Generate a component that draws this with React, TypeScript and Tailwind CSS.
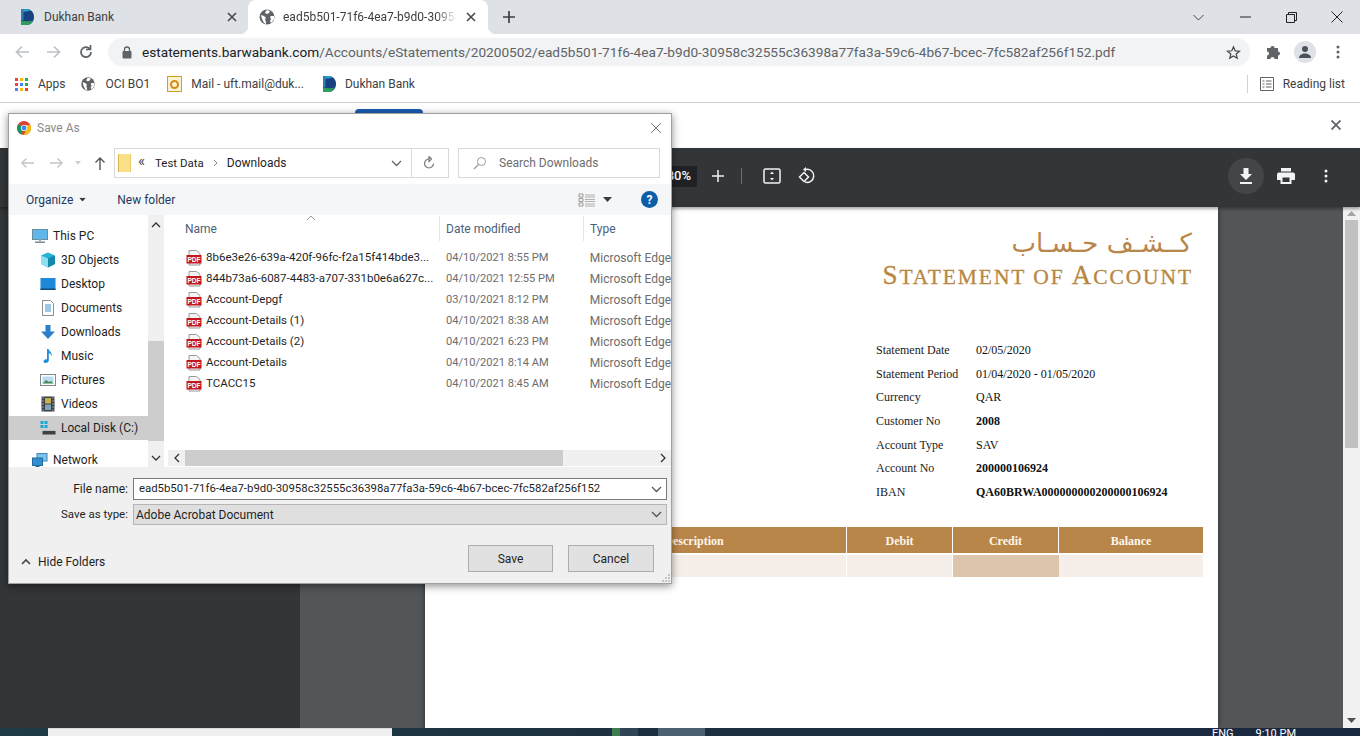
import React from "react";

const Dukhan = () => (
  <svg width="14" height="18" viewBox="0 0 14 18" className="shrink-0">
    <path d="M1 1H6C11 1 14 4.500 14 9C14 13.500 11 17 6 17H1Z" fill="#17417f" />
    <path d="M1 1H6C8 1 9.500 1.600 10.800 2.600C8 3.200 5 4 1 4Z" fill="#2b9cc4" />
    <path d="M1 1H3.500V12H1Z" fill="#2a7fb8" />
    <path d="M1 12.500C5 13.500 9 13.500 13 12.400C11.800 15.200 9.200 17 6 17H1Z" fill="#2f9e5b" />
  </svg>
);

const Globe = ({ className = "" }: { className?: string }) => (
  <svg width="16" height="16" viewBox="0 0 16 16" className={`shrink-0 ${className}`}>
    <circle cx="8" cy="8" r="7.500" fill="#5f6368" />
    <path d="M2 6l3 1 2 2-1 1 1 3v2l-2-1-2-4zM8 1l3 1-1 2-2 1-2-1 1-2zM12 7h3v3l-2 3-1 1-1-2 1-2-1-2z" fill="#fff" />
  </svg>
);

const ChromeLogo = () => (
  <svg width="14" height="14" viewBox="0 0 14 14" className="shrink-0">
    <circle cx="7" cy="7" r="7" fill="#db4437" />
    <path d="M7 7L1 3.500A7 7 0 0 0 4 13.300Z" fill="#0f9d58" />
    <path d="M7 4h5.900A7 7 0 0 1 14 7a7 7 0 0 1-7 7l-.5-.1L10 8z" fill="#f4c20d" />
    <circle cx="7" cy="7" r="3.100" fill="#fff" />
    <circle cx="7" cy="7" r="2.400" fill="#4285f4" />
  </svg>
);

const PdfIcon = () => (
  <svg width="16" height="16" viewBox="0 0 16 16" className="shrink-0">
    <path d="M3 .5h7.500L14 3.500V15H3z" fill="#f4f4f4" stroke="#9a9a9a" />
    <rect x="0.500" y="5" width="15" height="8.500" fill="#c4161c" />
    <text x="8" y="12" textAnchor="middle" fontSize="6.600" fontWeight="700" fill="#fff" fontFamily="Liberation Sans, sans-serif">PDF</text>
  </svg>
);

const NavIcon = ({ kind }: { kind: string }) => {
  const common = { width: 16, height: 16, viewBox: "0 0 16 16", className: "shrink-0" };
  switch (kind) {
    case "pc":
      return (
        <svg {...common}>
          <rect x="0.500" y="1.500" width="15" height="10" fill="#5fb6ea" stroke="#6a8ca0" />
          <rect x="3" y="13.500" width="10" height="1.500" fill="#7c8a94" />
          <rect x="7" y="11.500" width="2" height="2" fill="#9aa5ad" />
        </svg>
      );
    case "3d":
      return (
        <svg {...common}>
          <path d="M8 0.500L15 3.500V12L8 15.500L1 12V3.500Z" fill="#27b3d6" />
          <path d="M1 3.500L8 6.500V15.500L1 12Z" fill="#8fe0f0" />
          <path d="M8 6.500L15 3.500V12L8 15.500Z" fill="#1489ac" />
        </svg>
      );
    case "desktop":
      return (
        <svg {...common}>
          <rect x="0.500" y="2" width="15" height="12" fill="#1f88d8" />
          <rect x="0.500" y="12.500" width="15" height="1.500" fill="#0d4a7d" />
        </svg>
      );
    case "docs":
      return (
        <svg {...common}>
          <path d="M2.500 .5h8l3 3v12h-11z" fill="#fff" stroke="#8a8f94" />
          <path d="M5 5h6M5 7h6M5 9h6M5 11h6" stroke="#3f8fc5" />
        </svg>
      );
    case "down":
      return (
        <svg {...common}>
          <path d="M5.500 1h5v6.500H15L8 15 1 7.500h4.500z" fill="#2a80c8" />
        </svg>
      );
    case "music":
      return (
        <svg {...common}>
          <path d="M7 1h1.600c.4 2.400 3.600 3.400 3.400 7-.8-1.800-2-2.600-3.200-2.800V12.500C8.800 14.200 7 15 5.400 15 4 15 3.200 14 3.600 13c.5-1.200 2-1.900 3.400-1.600z" fill="#1e8fdc" />
        </svg>
      );
    case "pics":
      return (
        <svg {...common}>
          <rect x="0.500" y="2.500" width="15" height="11" fill="#fff" stroke="#7f8a92" />
          <rect x="2.500" y="4.500" width="11" height="7" fill="#b9dcef" />
          <path d="M2.500 11.500L6 8l3 2 2-1 2.500 2.500z" fill="#4f8a5c" />
        </svg>
      );
    case "videos":
      return (
        <svg {...common}>
          <rect x="1.500" y="0.500" width="13" height="15" fill="#3a3f44" />
          <rect x="5" y="2" width="6" height="5.500" fill="#c9b04d" />
          <rect x="5" y="8.500" width="6" height="5.500" fill="#7fa3b8" />
          <path d="M2.500 2h1M2.500 5h1M2.500 8h1M2.500 11h1M2.500 14h1M12.500 2h1M12.500 5h1M12.500 8h1M12.500 11h1M12.500 14h1" stroke="#fff" />
        </svg>
      );
    case "disk":
      return (
        <svg {...common}>
          <rect x="0.500" y="1" width="3" height="3" fill="#19a6d8" />
          <rect x="4.500" y="1" width="3" height="3" fill="#19a6d8" />
          <rect x="0.500" y="5" width="3" height="3" fill="#19a6d8" />
          <rect x="4.500" y="5" width="3" height="3" fill="#19a6d8" />
          <rect x="2.500" y="11" width="13" height="3.500" fill="#3c4246" />
          <rect x="2.500" y="10" width="13" height="1" fill="#b9c0c4" />
        </svg>
      );
    default:
      return (
        <svg {...common}>
          <rect x="5" y="1.500" width="10" height="7.500" fill="#7cc4ee" stroke="#3f87b8" />
          <rect x="0.500" y="6" width="10" height="7.500" fill="#2f8fd0" stroke="#236a9b" />
          <rect x="3.500" y="13.500" width="4" height="1.500" fill="#236a9b" />
        </svg>
      );
  }
};

const navItems = [
  ["pc", "This PC", 0],
  ["3d", "3D Objects", 1],
  ["desktop", "Desktop", 1],
  ["docs", "Documents", 1],
  ["down", "Downloads", 1],
  ["music", "Music", 1],
  ["pics", "Pictures", 1],
  ["videos", "Videos", 1],
  ["disk", "Local Disk (C:)", 1],
] as const;

const files = [
  ["8b6e3e26-639a-420f-96fc-f2a15f414bde3...", "04/10/2021 8:55 PM"],
  ["844b73a6-6087-4483-a707-331b0e6a627c...", "04/10/2021 12:55 PM"],
  ["Account-Depgf", "03/10/2021 8:12 PM"],
  ["Account-Details (1)", "04/10/2021 8:38 AM"],
  ["Account-Details (2)", "04/10/2021 6:23 PM"],
  ["Account-Details", "04/10/2021 8:14 AM"],
  ["TCACC15", "04/10/2021 8:45 AM"],
];

const statement: [string, string, boolean][] = [
  ["Statement Date", "02/05/2020", false],
  ["Statement Period", "01/04/2020 - 01/05/2020", false],
  ["Currency", "QAR", false],
  ["Customer No", "2008", true],
  ["Account Type", "SAV", false],
  ["Account No", "200000106924", true],
  ["IBAN", "QA60BRWA000000000200000106924", true],
];

const Caret = ({ className = "" }: { className?: string }) => (
  <svg width="9" height="5" viewBox="0 0 9 5" className={className}>
    <path d="M0 0h9L4.500 5z" fill="#3c3c3c" />
  </svg>
);

const Chev = ({ d = "M1 1l4.500 4.500L10 1", color = "#555", w = 11, h = 7 }: { d?: string; color?: string; w?: number; h?: number }) => (
  <svg width={w} height={h} viewBox={`0 0 ${w} ${h}`} className="shrink-0">
    <path d={d} fill="none" stroke={color} strokeWidth="1.300" />
  </svg>
);

function Dialog() {
  return (
    <div className="absolute z-20 left-[8px] top-[113px] w-[664px] h-[471px] bg-[#f0f0f0] border border-[#a0a0a0] shadow-[0_2px_8px_rgba(0,0,0,0.45)] flex flex-col text-[12px] text-[#1f1f1f] font-['Roboto',sans-serif]">
      {/* title */}
      <div className="h-[27px] bg-white flex items-center pl-[8px] pr-[8px] shrink-0">
        <ChromeLogo />
        <span className="ml-[6px] text-[#8a8a8a] text-[12px]">Save As</span>
        <svg width="12" height="12" viewBox="0 0 12 12" className="ml-auto mr-[1px]">
          <path d="M1 1l10 10M11 1L1 11" stroke="#777" strokeWidth="1" />
        </svg>
      </div>
      {/* address */}
      <div className="h-[43px] bg-white flex items-start pt-[7px] shrink-0">
        <div className="w-[105px] h-[30px] flex items-center pl-[11px]">
          <svg width="14" height="12" viewBox="0 0 14 12"><path d="M14 6H2M6.500 1.500L2 6l4.500 4.500" fill="none" stroke="#c4c4c4" strokeWidth="1.400" /></svg>
          <svg width="14" height="12" viewBox="0 0 14 12" className="ml-[16px]"><path d="M0 6h12M7.500 1.500L12 6l-4.500 4.500" fill="none" stroke="#c4c4c4" strokeWidth="1.400" /></svg>
          <svg width="6" height="4" viewBox="0 0 6 4" className="ml-[11px]"><path d="M0 0h6L3 4z" fill="#d0d0d0" /></svg>
          <svg width="12" height="14" viewBox="0 0 12 14" className="ml-[13px]"><path d="M6 14V2M1.500 6.500L6 2l4.500 4.500" fill="none" stroke="#555" strokeWidth="1.400" /></svg>
        </div>
        <div className="w-[335px] h-[30px] border border-[#d9d9d9] flex items-center">
          <svg width="14" height="18" viewBox="0 0 14 18" className="ml-[3px] shrink-0">
            <path d="M0 0h13v18H0z" fill="#fbe08a" />
            <path d="M0 0h1v18H0zM12.500 0h.5v18h-.5z" fill="#dcb54f" />
          </svg>
          <span className="ml-[6px] text-[15px] text-[#444] leading-none mb-[4px] w-[8px]">«</span>
          <span className="ml-[9px] text-[11.500px] pt-[1px]">Test Data</span>
          <svg width="5" height="8" viewBox="0 0 5 8" className="mx-[9px]"><path d="M1 1l3 3-3 3" fill="none" stroke="#888" /></svg>
          <span>Downloads</span>
          <div className="ml-auto h-full flex items-center">
            <Chev color="#666" />
            <div className="ml-[9px] w-[37px] pr-[2px] h-full border-l border-[#d9d9d9] flex items-center justify-center">
              <svg width="12" height="14" viewBox="0 0 12 14"><path d="M6 3a4.500 4.500 0 1 0 4.500 4.500M6 .5v5L8.500 3z" fill="none" stroke="#777" strokeWidth="1.200" /></svg>
            </div>
          </div>
        </div>
        <div className="ml-[9px] w-[202px] h-[30px] border border-[#d9d9d9] flex items-center pl-[14px] text-[#6d6d6d]">
          <svg width="14" height="14" viewBox="0 0 14 14"><circle cx="8.500" cy="5.500" r="4" fill="none" stroke="#999" /><path d="M5.500 8.500L1 13" stroke="#999" strokeWidth="1.200" /></svg>
          <span className="ml-[12px]">Search Downloads</span>
        </div>
      </div>
      {/* commands */}
      <div className="h-[31px] bg-[#f5f6f7] flex items-center pl-[17px] pr-[13px] text-[#1f3a5f] shrink-0">
        <span>Organize</span>
        <Caret className="ml-[5px] scale-75" />
        <span className="ml-[30px]">New folder</span>
        <svg width="18" height="14" viewBox="0 0 18 14" className="ml-auto -translate-x-[2px]">
          <path d="M1 1h4v3H1zM1 5.500h4v3H1zM1 10h4v3H1z" fill="none" stroke="#9a9a9a" />
          <path d="M7 2h10M7 4h10M7 6.500h10M7 8.500h10M7 11h10M7 13h10" stroke="#b0b0b0" />
        </svg>
        <Caret className="ml-[6px] -translate-x-[1px]" />
        <div className="ml-[28px] w-[17px] h-[17px] rounded-full bg-[#0b5ea8] text-white text-[12px] font-bold flex items-center justify-center">?</div>
      </div>
      {/* main */}
      <div className="h-[252px] flex shrink-0 bg-white">
        <div className="w-[139px] pt-[9px] overflow-hidden shrink-0">
          {navItems.map(([k, label, depth]) => (
            <div key={label} className={`h-[24px] flex items-center gap-[5px] whitespace-nowrap ${depth ? "pl-[31px]" : "pl-[23px]"} ${k === "disk" ? "bg-[#cdcdcd]" : ""}`}>
              <NavIcon kind={k} />
              <span>{label}</span>
            </div>
          ))}
          <div className="h-[24px] mt-[8px] flex items-center gap-[5px] pl-[23px]">
            <NavIcon kind="net" />
            <span>Network</span>
          </div>
        </div>
        <div className="w-[16px] bg-[#f0f0f0] flex flex-col items-center shrink-0">
          <div className="h-[20px] flex items-center">
            <Chev d="M1 5l4-4 4 4" color="#333" w={10} h={6} />
          </div>
          <div className="mt-[106px] w-full h-[100px] bg-[#cdcdcd]" />
          <div className="mt-auto h-[18px] flex items-center">
            <Chev d="M1 1l4 4 4-4" color="#333" w={10} h={6} />
          </div>
        </div>
        <div className="flex-1 ml-[2px] min-w-0 flex flex-col relative">
          <svg width="10" height="6" viewBox="0 0 10 6" className="absolute left-[140px] top-[0px]"><path d="M1 5l4-4 4 4" fill="none" stroke="#999" /></svg>
          <div className="h-[26px] pt-[1px] flex items-center text-[#4c607a] shrink-0">
            <span className="w-[274px] pl-[19px] h-full flex items-center border-r border-[#e5e5e5]">Name</span>
            <span className="w-[144px] pl-[6px] h-full flex items-center border-r border-[#e5e5e5]">Date modified</span>
            <span className="pl-[6px]">Type</span>
          </div>
          <div className="pt-[6px] flex-1 min-h-0">
            {files.map(([n, d]) => (
              <div key={n} className="h-[21px] flex items-center whitespace-nowrap">
                <div className="w-[280px] pl-[20px] flex items-center gap-[4px] overflow-hidden">
                  <PdfIcon />
                  <span className="text-[11.500px] pt-[1px]">{n}</span>
                </div>
                <span className="w-[144px] text-[#6d6d6d] text-[11.100px] pt-[1px]">{d}</span>
                <span className="text-[#6d6d6d] overflow-hidden">Microsoft Edge</span>
              </div>
            ))}
          </div>
          <div className="h-[16px] bg-[#f0f0f0] flex items-center shrink-0 mb-[1px] ml-[2px]">
            <div className="w-[17px] flex justify-center"><Chev d="M5 1L1 5l4 4" color="#333" w={6} h={10} /></div>
            <div className="w-[378px] h-full bg-[#cdcdcd]" />
            <div className="ml-auto w-[17px] flex justify-center"><Chev d="M1 1l4 4-4 4" color="#333" w={6} h={10} /></div>
          </div>
        </div>
      </div>
      {/* fields */}
      <div className="flex-1 pt-[11px] relative">
        <div className="flex items-center h-[22px]">
          <span className="w-[119px] text-right">File name:</span>
          <div className="ml-[5px] w-[534px] h-[22px] bg-white border border-[#7a7a7a] flex items-center pl-[5px] pr-[4px]">
            <span className="whitespace-nowrap text-[11.360px]">ead5b501-71f6-4ea7-b9d0-30958c32555c36398a77fa3a-59c6-4b67-bcec-7fc582af256f152</span>
            <span className="ml-auto"><Chev color="#555" /></span>
          </div>
        </div>
        <div className="flex items-center h-[21px] mt-[4px]">
          <span className="w-[119px] text-right text-[11.500px]">Save as type:</span>
          <div className="ml-[5px] w-[534px] h-[21px] bg-[#dfdfdf] border border-[#b5b5b5] flex items-center pl-[2px] pr-[4px]">
            <span>Adobe Acrobat Document</span>
            <span className="ml-auto"><Chev color="#555" /></span>
          </div>
        </div>
        <div className="flex items-center mt-[20px] pr-[17px]">
          <svg width="10" height="7" viewBox="0 0 10 7" className="ml-[12px] mt-[6px]"><path d="M1 6l4-4 4 4" fill="none" stroke="#444" strokeWidth="1.600" /></svg>
          <span className="ml-[7px] mt-[6px]">Hide Folders</span>
          <button className="ml-auto w-[85px] h-[27px] bg-[#e1e1e1] border border-[#adadad]">Save</button>
          <button className="ml-[15px] w-[86px] h-[27px] bg-[#e1e1e1] border border-[#adadad]">Cancel</button>
        </div>
        <svg width="8" height="8" viewBox="0 0 8 8" className="absolute right-[1px] bottom-[1px]">
          <path d="M6 0h2v2H6zM3 3h2v2H3zM6 3h2v2H6zM0 6h2v2H0zM3 6h2v2H3zM6 6h2v2H6z" fill="#c4c4c4" />
        </svg>
      </div>
    </div>
  );
}

export default function App() {
  return (
    <div className="relative w-[1360px] h-[736px] overflow-hidden flex flex-col bg-white font-['Roboto',sans-serif]">
      {/* tab strip */}
      <div className="h-[34px] bg-[#dee1e6] flex items-end shrink-0 text-[12px] text-[#3c4043]">
        <div className="w-[248px] h-[34px] flex items-center pl-[20px] pr-[10px]">
          <Dukhan />
          <span className="ml-[10px]">Dukhan Bank</span>
          <svg width="10" height="10" viewBox="0 0 10 10" className="ml-auto mr-[1px]"><path d="M1 1l8 8M9 1L1 9" stroke="#45494d" strokeWidth="1.600" /></svg>
        </div>
        <div className="relative w-[240px] h-[34px] bg-white rounded-t-[8px] flex items-center pl-[11px] pr-[12px]">
          <div className="absolute -left-[8px] bottom-0 w-[8px] h-[8px] bg-[radial-gradient(circle_at_0_0,transparent_8px,white_8.500px)]" />
          <div className="absolute -right-[8px] bottom-0 w-[8px] h-[8px] bg-[radial-gradient(circle_at_100%_0,transparent_8px,white_8.500px)]" />
          <Globe />
          <span className="ml-[8px] w-[174px] overflow-hidden whitespace-nowrap text-[#3c4043] [mask-image:linear-gradient(to_right,black_88%,transparent)]">ead5b501-71f6-4ea7-b9d0-30958c32555c36398a77</span>
          <svg width="10" height="10" viewBox="0 0 10 10" className="ml-auto"><path d="M1 1l8 8M9 1L1 9" stroke="#45494d" strokeWidth="1.600" /></svg>
        </div>
        <div className="h-[34px] flex items-center ml-[15px]">
          <svg width="12" height="12" viewBox="0 0 12 12"><path d="M6 0v12M0 6h12" stroke="#3c4043" strokeWidth="1.700" /></svg>
        </div>
        <div className="ml-auto h-[34px] flex items-center">
          <svg width="11" height="7" viewBox="0 0 11 7"><path d="M.5 1l5 5 5-5" fill="none" stroke="#444" /></svg>
          <div className="w-[46px] ml-[18px] flex justify-center"><svg width="11" height="2" viewBox="0 0 11 2"><path d="M0 1h11" stroke="#222" /></svg></div>
          <div className="w-[46px] flex justify-center"><svg width="11" height="11" viewBox="0 0 11 11"><path d="M.5 2.500h8v8h-8zM2.500 2.500v-2h8v8h-2" fill="none" stroke="#222" /></svg></div>
          <div className="w-[46px] flex justify-center"><svg width="12" height="12" viewBox="0 0 12 12"><path d="M.5.5l11 11M11.500.5l-11 11" stroke="#222" /></svg></div>
        </div>
      </div>
      {/* toolbar */}
      <div className="h-[35px] pt-[1px] flex items-center shrink-0 pl-[15px]">
        <svg width="14" height="14" viewBox="0 0 14 14"><path d="M14 7H2M7 1.500L1.500 7 7 12.500" fill="none" stroke="#bdc1c6" strokeWidth="1.700" /></svg>
        <svg width="14" height="14" viewBox="0 0 14 14" className="ml-[18px]"><path d="M0 7h12M7 1.500L12.500 7 7 12.500" fill="none" stroke="#bdc1c6" strokeWidth="1.700" /></svg>
        <svg width="14" height="14" viewBox="0 0 14 14" className="ml-[18px]"><path d="M12 7a5 5 0 1 1-1.500-3.500M11.500 0v4.500H7" fill="none" stroke="#5f6368" strokeWidth="1.700" /></svg>
        <div className="ml-[15px] w-[1142px] h-[28px] rounded-full bg-[#f1f3f4] flex items-center pl-[14px] pr-[9px] shrink-0">
          <svg width="10" height="13" viewBox="0 0 10 13" className="shrink-0"><rect x="0.500" y="5" width="9" height="7.500" rx="1" fill="#5f6368" /><path d="M2.500 5V3.500a2.500 2.500 0 0 1 5 0V5" fill="none" stroke="#5f6368" strokeWidth="1.300" /></svg>
          <span className="ml-[10px] text-[13.650px] whitespace-nowrap text-[#5f6368]">
            <span className="text-[#202124]">estatements.barwabank.com</span>/Accounts/eStatements/20200502/ead5b501-71f6-4ea7-b9d0-30958c32555c36398a77fa3a-59c6-4b67-bcec-7fc582af256f152.pdf
          </span>
          <svg width="15" height="15" viewBox="0 0 24 24" className="ml-auto shrink-0"><path d="M12 3l2.700 6.300 6.800.6-5.200 4.500 1.600 6.700L12 17.500 6.100 21l1.600-6.700-5.200-4.500 6.800-.6z" fill="none" stroke="#45494d" strokeWidth="2" /></svg>
        </div>
        <svg width="16" height="16" viewBox="0 0 16 16" className="ml-[16px] shrink-0"><path d="M1 4h3.500a2 2 0 1 1 4 0H12v3.500a2 2 0 1 1 0 4V15H8.500a2 2 0 1 0-4 0H1v-3.500a2 2 0 1 0 0-4z" fill="#5f6368" /></svg>
        <div className="ml-[12px] w-[22px] h-[22px] rounded-full bg-[#dee1e6] flex items-center justify-center shrink-0">
          <svg width="14" height="14" viewBox="0 0 14 14"><circle cx="7" cy="4" r="3" fill="#4a5058" /><path d="M1 13c0-3 3-4.500 6-4.500s6 1.500 6 4.500z" fill="#4a5058" /></svg>
        </div>
        <svg width="4" height="14" viewBox="0 0 4 14" className="ml-[20px] shrink-0"><circle cx="2" cy="2" r="1.500" fill="#5f6368" /><circle cx="2" cy="7" r="1.500" fill="#5f6368" /><circle cx="2" cy="12" r="1.500" fill="#5f6368" /></svg>
      </div>
      {/* bookmarks */}
      <div className="h-[34px] border-b border-[#d0d2d5] flex items-center shrink-0 text-[12px] text-[#3c4043] pl-[15px] pb-[3px]">
        <svg width="13" height="13" viewBox="0 0 13 13" className="shrink-0">
          {[0, 5, 10].flatMap((y, i) =>
            [0, 5, 10].map((x, j) => (
              <rect key={`${i}${j}`} x={x} y={y} width="3" height="3" fill={["#ea4335", "#fbbc04", "#34a853", "#ea4335", "#4285f4", "#34a853", "#4285f4", "#fbbc04", "#ea4335"][i * 3 + j]} />
            ))
          )}
        </svg>
        <span className="ml-[10px]">Apps</span>
        <Globe className="ml-[14px] scale-90" />
        <span className="ml-[10px]">OCI BO1</span>
        <div className="ml-[17px] w-[15px] h-[16px] bg-[#fbf3d0] border border-[#d79b2a] flex items-center justify-center shrink-0">
          <div className="w-[9px] h-[9px] rounded-full border-2 border-[#d4881c]" />
        </div>
        <span className="ml-[9px]">Mail - uft.mail@duk...</span>
        <span className="ml-[18px]"><Dukhan /></span>
        <span className="ml-[9px]">Dukhan Bank</span>
        <div className="ml-auto w-px h-[18px] bg-[#d0d2d5]" />
        <svg width="14" height="14" viewBox="0 0 14 14" className="ml-[12px]"><path d="M.5.5h13v13H.5zM2.500 4h2M6 4h5.500M2.500 7h2M6 7h5.500M2.500 10h2M6 10h5.500" fill="none" stroke="#5f6368" /></svg>
        <span className="ml-[9px] mr-[15px]">Reading list</span>
      </div>
      {/* info bar */}
      <div className="h-[45px] flex items-center shrink-0 relative">
        <div className="absolute left-[355px] top-[6px] w-[68px] h-[32px] bg-[#1a5cb0] rounded-[4px]" />
        <svg width="10" height="10" viewBox="0 0 10 10" className="ml-auto mr-[19px] -mt-[1px]"><path d="M.5.5l9 9M9.500.5l-9 9" stroke="#5f6368" strokeWidth="1.800" /></svg>
      </div>
      {/* pdf toolbar */}
      <div className="h-[59px] pb-[3px] bg-[#323639] flex items-center shrink-0 text-white relative z-10 shadow-[0_2px_3px_rgba(0,0,0,0.35)]">
        <div className="ml-[660px] w-[37px] h-[21px] bg-[#1f2124] flex items-center justify-end pr-[6px] text-[13px] font-medium">80%</div>
        <svg width="12" height="12" viewBox="0 0 12 12" className="ml-[15px]"><path d="M6 0v12M0 6h12" stroke="#f1f3f4" strokeWidth="1.500" /></svg>
        <div className="ml-[17px] w-px h-[16px] bg-[#6b6f72]" />
        <svg width="18" height="16" viewBox="0 0 18 16" className="ml-[21px]"><rect x="1" y="1" width="16" height="14" rx="1.500" fill="none" stroke="#f1f3f4" strokeWidth="1.500" /><path d="M9 3.500L11 6H7zM9 12.500L7 10h4z" fill="#f1f3f4" /></svg>
        <svg width="18" height="18" viewBox="0 0 18 18" className="ml-[17px]"><path d="M8 2.500a6.500 6.500 0 1 1-1 12.500" fill="none" stroke="#f1f3f4" strokeWidth="1.500" /><path d="M8 0v5L5 2.500z" fill="#f1f3f4" /><path d="M1.500 10L6 5.500 10.500 10 6 14.500z" fill="#323639" stroke="#f1f3f4" strokeWidth="1.500" /></svg>
        <div className="ml-auto w-[36px] h-[36px] rounded-full bg-[#424649] flex items-center justify-center">
          <svg width="14" height="16" viewBox="0 0 14 16"><path d="M4.500 0h5v6H13L7 12 1 6h3.500zM1 14h12v2H1z" fill="#f1f3f4" /></svg>
        </div>
        <svg width="18" height="16" viewBox="0 0 18 16" className="ml-[13px]"><path d="M4 0h10v3.500H4zM2 4.500h14a2 2 0 0 1 2 2V12h-3.500v4h-11v-4H0V6.500a2 2 0 0 1 2-2z" fill="#f1f3f4" /><rect x="5.500" y="9.500" width="7" height="4.500" fill="#323639" /></svg>
        <svg width="4" height="14" viewBox="0 0 4 14" className="ml-[29px] mr-[32px]"><circle cx="2" cy="2" r="1.500" fill="#f1f3f4" /><circle cx="2" cy="7" r="1.500" fill="#f1f3f4" /><circle cx="2" cy="12" r="1.500" fill="#f1f3f4" /></svg>
      </div>
      {/* viewer */}
      <div className="flex-1 flex min-h-0 overflow-hidden">
        <div className="w-[300px] bg-[#323639] shrink-0" />
        <div className="flex-1 bg-[#525659] pl-[125px] min-w-0">
          <div className="w-[793px] h-full bg-white shadow-[0_0_5px_rgba(0,0,0,0.5)] font-['Liberation_Serif',serif] relative">
            <div className="pr-[25px] pt-[24px] text-right">
              <div dir="rtl" className="text-[#b9864a] text-[26px] leading-[25px] font-['DejaVu_Sans',sans-serif] whitespace-nowrap pr-[1px]">كــشـف حـسـاب</div>
              <div className="text-[#b8873f] text-[21.500px] leading-[28px] mt-[5px] tracking-[1.900px] whitespace-nowrap [-webkit-text-stroke:0.3px_#b8873f]">
                <span className="text-[27px]">S</span>TATEMENT OF <span className="text-[27px]">A</span>CCOUNT
              </div>
            </div>
            <div className="ml-[451px] mt-[47px] text-[12px] text-[#111] leading-[14px]">
              {statement.map(([l, v, b]) => (
                <div key={l} className="h-[23.700px] flex items-center">
                  <span className="w-[100px] shrink-0 text-[#222]">{l}</span>
                  <span className={b ? "font-bold" : ""}>{v}</span>
                </div>
              ))}
            </div>
            <div className="ml-[16px] mr-[15px] mt-[23px] text-[12px] font-bold text-[#fdf6ec]">
              <div className="grid grid-cols-[101px_305px_106px_106px_144px] h-[26px] bg-[#b9864a] leading-[28px] text-center">
                <div />
                <div className="border-r border-white">Description</div>
                <div className="border-r border-white">Debit</div>
                <div className="border-r border-white">Credit</div>
                <div>Balance</div>
              </div>
              <div className="grid grid-cols-[101px_305px_106px_106px_144px] h-[22px] mt-[2px] bg-[#f6efe9]">
                <div />
                <div className="border-r border-white" />
                <div className="border-r border-white" />
                <div className="bg-[#dcc5aa]" />
                <div />
              </div>
            </div>
          </div>
        </div>
        <div className="w-[17px] bg-[#f1f1f1] shrink-0 flex flex-col items-center">
          <svg width="9" height="5" viewBox="0 0 9 5" className="mt-[4px]"><path d="M4.500 0L9 5H0z" fill="#a3a3a3" /></svg>
          <div className="mt-[4px] w-[13px] h-[228px] bg-[#c1c1c1]" />
          <svg width="9" height="5" viewBox="0 0 9 5" className="mt-auto mb-[5px]"><path d="M4.500 5L9 0H0z" fill="#505050" /></svg>
        </div>
      </div>
      {/* taskbar */}
      <div className="h-[8px] bg-[linear-gradient(to_right,#1f3b45,#1c2f40_50%,#1a2840)] flex shrink-0 overflow-hidden relative text-[11px] text-white">
        <div className="ml-[48px] w-[344px] h-full bg-[#efefef] border-t border-[#d8d8d8]" />
        <div className="ml-[220px] w-[8px] h-full bg-[#3f7d50]" />
        <div className="w-[18px] h-full bg-[#2f4557]" />
        <div className="w-[20px] h-full bg-[#1c2f40]" />
        <div className="w-[47px] h-full bg-[#4b6070]" />
        <div className="ml-auto flex pr-[64px] gap-[22px] -mt-[1px] leading-[14px]">
          <span>ENG</span>
          <span>9:10 PM</span>
        </div>
      </div>
      <Dialog />
    </div>
  );
}
